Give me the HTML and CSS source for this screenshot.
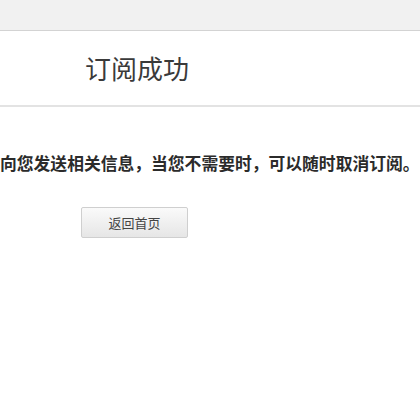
FILE: index.html
```html
<!DOCTYPE html>
<html lang="zh-CN">
<head>
<meta charset="utf-8">
<title>订阅成功</title>
<link rel="stylesheet" href="styles.css">
</head>
<body>
<div class="topbar"></div>
<div class="header">
  <h1 class="title">订阅成功</h1>
</div>
<div class="content">
  <p class="message">向您发送相关信息，当您不需要时，可以随时取消订阅。</p>
  <div class="actions">
    <a class="btn" href="#">返回首页</a>
  </div>
</div>
</body>
</html>
```

FILE: styles.css
```css
html, body {
  margin: 0;
  padding: 0;
  background: #fff;
  font-family: "Noto Sans CJK SC", "Noto Sans", sans-serif;
  color: #333;
  overflow: hidden;
}
.topbar {
  height: 30px;
  background: #f1f1f1;
  border-bottom: 1px solid #d3d3d3;
}
.header {
  height: 74px;
  border-bottom: 2px solid #e3e3e3;
  display: flex;
  align-items: center;
  padding-left: 85px;
}
.title {
  margin: 0;
  font-size: 26px;
  font-weight: normal;
  color: #3a3a3a;
  line-height: 1;
}
.content {
  padding-top: 44px;
}
.message {
  margin: 0;
  font-size: 16.8px;
  font-weight: bold;
  line-height: 24px;
  color: #2b2b2b;
  white-space: nowrap;
}
.actions {
  padding-top: 32px;
  padding-left: 81px;
}
.btn {
  display: inline-flex;
  align-items: center;
  justify-content: center;
  width: 105px;
  height: 29px;
  border: 1px solid #cfcfcf;
  border-radius: 2px;
  background: linear-gradient(#fafafa, #e6e6e6);
  font-size: 13px;
  color: #444;
  text-decoration: none;
}
```
